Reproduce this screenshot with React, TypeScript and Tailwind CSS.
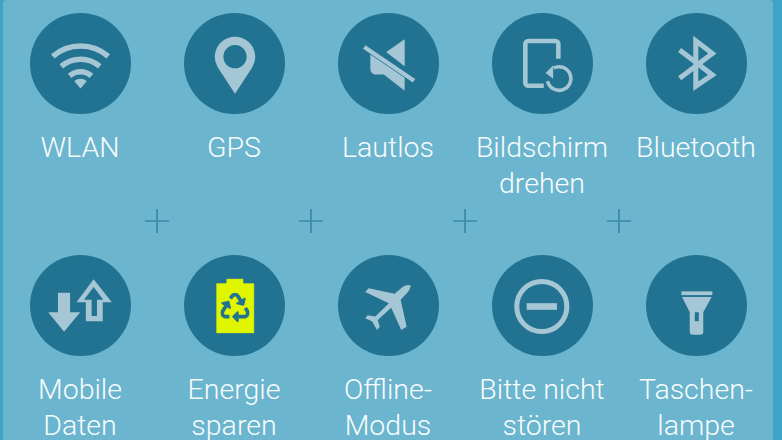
import { FaRecycle } from 'react-icons/fa';
import type { ReactNode } from 'react';

const ink = '#a5c6d4';
const disc = '#227391';

const Wifi = () => (
  <g fill="none" stroke={ink} strokeWidth="5.5">
    <path d="M22.5 43A42 42 0 0 1 77.5 43" />
    <path d="M31 52.8A29 29 0 0 1 69 52.8" />
    <path d="M39.2 62.2A16.5 16.5 0 0 1 60.8 62.2" />
    <path d="M50 74.7L43.8 67.5A9.5 9.5 0 0 1 56.2 67.5Z" fill={ink} stroke="none" />
  </g>
);

const Pin = () => (
  <path
    fillRule="evenodd"
    fill={ink}
    d="M50.5 80L33.5 54A20 20 0 1 1 67.5 54ZM50.5 31.8A11.5 11.5 0 1 0 50.5 54.8A11.5 11.5 0 1 0 50.5 31.8Z"
  />
);

const Mute = () => (
  <g fill={ink}>
    <path d="M66 26L47.7 38.7L66 52.7Z" />
    <path d="M32 41L66 64V77L45.3 61H36.5Q32 60 32 55Z" />
    <path d="M26 33.7L75.3 67" stroke={ink} strokeWidth="4.2" fill="none" />
  </g>
);

const Rotate = () => (
  <g fill="none" stroke={ink}>
    <path strokeWidth="4.5" d="M65.7 45.3V30.7a3 3 0 0 0-3-3H36a3 3 0 0 0-3 3V69a3 3 0 0 0 3 3H51.3" />
    <path strokeWidth="3.5" d="M61 54.5A11.7 11.7 0 1 1 55 67.5" />
    <path stroke="none" fill={ink} d="M60.5 52L53 59.5L60.5 65Z" />
  </g>
);

const Bluetooth = () => (
  <path
    fill="none"
    stroke={ink}
    strokeWidth="5"
    d="M33.3 64.7L65.7 40L49.3 27.5V72.5L65.7 61.3L33.3 36.7"
  />
);

const Arrows = () => (
  <g fill={ink}>
    <path d="M27.7 37.3H39.7V56.7H49.7L33.7 76L18 56.7H27.7Z" />
    <path
      fillRule="evenodd"
      d="M63 24L81 46.7H72V65.7H55.3V46.7H46ZM63 31.7L53.5 44.3H61V60.5H66.3V44.3H72.5Z"
    />
  </g>
);

const Battery = () => (
  <g>
    <path d="M41.7 23.3H59V27.7H69.7V77.7H31.7V27.7H41.7Z" fill="#e0f500" stroke="#1f6fa0" strokeWidth="0.7" />
    <FaRecycle x="36" y="37.5" size={29} color={disc} />
  </g>
);

const Plane = () => (
  <g transform="translate(-18 -5) scale(0.3333)">
    <path
      fill={ink}
      d="M270 106Q268 120 255 132L240 148L258 228L242 238L212 172L172 208L178 228L170 238L155 212L135 203L142 194L165 198L205 158L135 125L145 114L222 130L246 110Q260 100 270 106Z"
    />
  </g>
);

const Minus = () => (
  <g>
    <circle cx="49.3" cy="51" r="24.8" fill="none" stroke={ink} strokeWidth="5" />
    <path d="M34.3 47.7H64.3V54.3H34.3Z" fill={ink} />
  </g>
);

const Torch = () => (
  <g fill={ink}>
    <path d="M35 36H65.7V39.7H35Z" />
    <path
      fillRule="evenodd"
      d="M35.7 41.7H65L56.7 56.7V76Q56.7 79 53.7 79H46.3Q43.3 79 43.3 76V56.7ZM48.3 56.7V65.7H52.3V56.7Z"
    />
  </g>
);

type Tile = { label: string; icon: ReactNode };

const topRow: Tile[] = [
  { label: 'WLAN', icon: <Wifi /> },
  { label: 'GPS', icon: <Pin /> },
  { label: 'Lautlos', icon: <Mute /> },
  { label: 'Bildschirm\ndrehen', icon: <Rotate /> },
  { label: 'Bluetooth', icon: <Bluetooth /> },
];

const bottomRow: Tile[] = [
  { label: 'Mobile\nDaten', icon: <Arrows /> },
  { label: 'Energie\nsparen', icon: <Battery /> },
  { label: 'Offline-\nModus', icon: <Plane /> },
  { label: 'Bitte nicht\nstören', icon: <Minus /> },
  { label: 'Taschen-\nlampe', icon: <Torch /> },
];

const TileCell = ({ tile }: { tile: Tile }) => (
  <div className="flex flex-col items-center">
    <div className="h-[101px] w-[101px] rounded-full bg-[#227391]">
      <svg viewBox="0 0 100 100" className="h-full w-full">
        {tile.icon}
      </svg>
    </div>
    <div className="mt-[16px] h-[72px] whitespace-pre-line text-center text-[28.5px] leading-[36px] font-light text-[#f8fcfd]">
      {tile.label}
    </div>
  </div>
);

const PlusMark = () => (
  <svg width="24" height="24" viewBox="0 0 24 24">
    <path d="M12 0V24M0 12H24" stroke="#3a88a8" strokeWidth="1.7" fill="none" />
  </svg>
);

export default function App() {
  return (
    <div className="h-[440px] w-[782px] overflow-hidden bg-[#3ea3c5] font-['Roboto',sans-serif]">
      <div className="ml-[3px] h-full w-[770px] rounded-t-[4px] bg-[#6bb5ce] pt-[13px]">
        <div className="grid grid-cols-5">
          {topRow.map((tile) => (
            <TileCell key={tile.label} tile={tile} />
          ))}
        </div>
        <div className="mt-[7px] mb-[22px] flex justify-between px-[142px]">
          <PlusMark />
          <PlusMark />
          <PlusMark />
          <PlusMark />
        </div>
        <div className="grid grid-cols-5">
          {bottomRow.map((tile) => (
            <TileCell key={tile.label} tile={tile} />
          ))}
        </div>
      </div>
    </div>
  );
}
